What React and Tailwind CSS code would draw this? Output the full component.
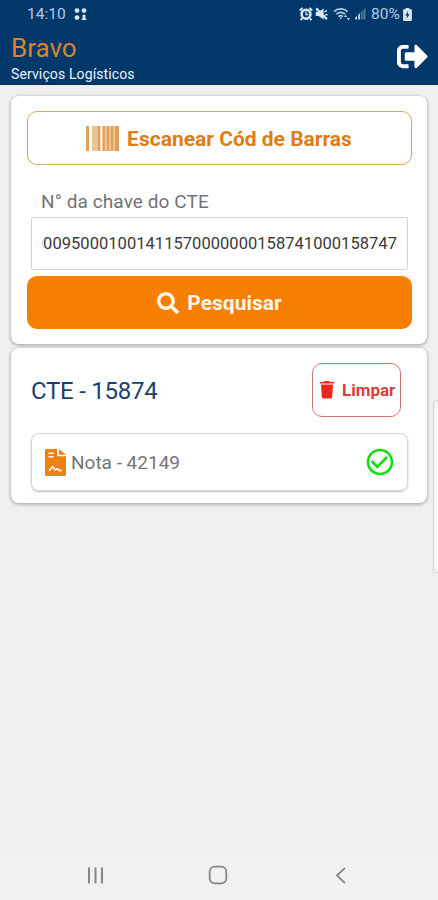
import React, { useState } from 'react';
import { FaSearch, FaSignOutAlt } from 'react-icons/fa';
import { MdCheckCircleOutline } from 'react-icons/md';

const StatusBar = () => (
  <div className="flex h-7 items-center justify-between pl-[27px] pr-[26px] text-[#b3cbe4]">
    <div className="flex items-center">
      <span className="w-[40px] pt-[2px] text-[15.5px] leading-none">14:10</span>
      <svg className="ml-[7px] h-[13px] w-[13px]" viewBox="0 0 13 13" fill="#d7e6f5">
        <circle cx="3" cy="2.6" r="2.4" />
        <circle cx="10" cy="2.6" r="2.4" />
        <circle cx="3" cy="9.6" r="2.4" />
        <circle cx="10" cy="8" r="1.6" />
        <path d="M7.4 12l1.6-3h2l1.6 3z" />
      </svg>
    </div>
    <div className="flex items-center">
      <svg className="h-[14px] w-[14px]" viewBox="0 0 14 14" fill="none" stroke="#d7e6f5">
        <circle cx="7" cy="7.2" r="4.4" strokeWidth="2.6" />
        <path d="M.8 3.6L3.6 1M13.2 3.6L10.4 1M3 11.2l-1.4 2M11 11.2l1.4 2" strokeWidth="2" />
        <path d="M7 4.6v3h2.2" strokeWidth="1.2" />
      </svg>
      <svg className="ml-[2px] h-[14px] w-[13px]" viewBox="0 0 13 14" fill="#d7e6f5" stroke="#d7e6f5">
        <path d="M.8 4.8h2.8L8.6 1.4v11L3.6 9H.8z" stroke="none" />
        <path d="M1.2 1.4l10.8 10.8" strokeWidth="2.2" />
        <path d="M9.6 5l2.4-1.6M10 7.8h2.6" strokeWidth="1.4" />
      </svg>
      <svg className="ml-[5px] h-[15px] w-[18px]" viewBox="0 0 18 15" fill="none" stroke="currentColor" strokeWidth="1.7">
        <path d="M1 4.6C4.8 1 10.8 1 14.6 4.6M3.4 7.2c2.6-2.2 6.2-2.2 8.8 0M5.6 9.6c1.4-1.1 3-1.1 4.4 0" />
        <path d="M7.8 12.4l-1.4-2h2.8zM12.6 7.8l-1.8 2.2h3.6zM15.4 13.4l-1.6-2.4h3.2z" fill="currentColor" stroke="none" />
      </svg>
      <svg className="ml-[3px] h-[12px] w-[12px]" viewBox="0 0 12 12" fill="currentColor">
        <path d="M1 11.4V9.8l2-2v3.6zM4 11.4V7l2-2v6.4z" />
        <path d="M7 11.4V4l1.6-1.6v9zM9.4 11.4V1.8L11.4 0v11.4z" opacity="0.45" />
      </svg>
      <span className="ml-[5px] w-[30px] whitespace-nowrap pt-[2px] text-[15.5px] leading-none">80%</span>
      <svg className="ml-[2px] h-[13px] w-[9px]" viewBox="0 0 9 13" fill="#d7e6f5">
        <path d="M2.6 0h3.8v1.2H8q.9 0 .9.9V12q0 .9-.9.9H1q-.9 0-.9-.9V2.1q0-.9.9-.9h1.6z" />
        <path d="M5.1 2.9L2.2 7.4h1.9l-.6 3.4 3.2-4.6H4.7z" fill="#03386b" />
      </svg>
    </div>
  </div>
);

const Header = () => (
  <header className="h-[85px] border-b border-[#0b2c55] bg-[#03386b]">
    <StatusBar />
    <div className="flex justify-between pl-[11px] pr-[10px]">
      <div>
        <h1 className="mt-[5px] text-[26px] leading-[30px] text-[#d8842a]">Bravo</h1>
        <p className="mt-[3px] text-[14px] leading-4 tracking-[0.12px] text-[#eaf2fa]">Serviços Logísticos</p>
      </div>
      <button type="button" aria-label="Sair" className="mt-[13px] h-[31px] text-white">
        <FaSignOutAlt className="h-[31px] w-[31px]" />
      </button>
    </div>
  </header>
);

const BarcodeIcon = () => (
  <svg className="-ml-px mr-[8px] h-[25px] w-[33px]" viewBox="0 0 33 25">
    <path d="M6 0h8v25H6zM16 0h17v25H16z" fill="#ecc48f" />
    <path d="M0 0h3v25H0zM12 0h2.4v25H12zM17 0h1.6v25H17zM21 0h2v25h-2zM25 0h2v25h-2zM29 0h4v25h-4z" fill="#dfa05a" />
  </svg>
);

const TrashIcon = () => (
  <svg className="mr-[7px] h-[18px] w-[16px]" viewBox="0 0 16 18" fill="#e52a1c">
    <path d="M5.8 0h4.4l.8.9h4.2v1.7H.8V.9H5z" />
    <path d="M2 3.6h12l-.8 12.4q-.1 1.4-1.4 1.4H4.2q-1.3 0-1.4-1.4z" />
  </svg>
);

const InvoiceIcon = () => (
  <svg className="h-[27px] w-[21px]" viewBox="0 0 21 27">
    <path d="M1.4 0h10.8v7.2H21v18.4q0 1.4-1.4 1.4H1.4Q0 27 0 25.6V1.4Q0 0 1.4 0z" fill="#f08010" />
    <path d="M14 0l7 5.8h-7z" fill="#f08010" />
    <path d="M3.6 4.2h5M3.6 7.8h5" stroke="#fff" strokeWidth="1.6" />
    <path d="M3.8 21.6c1.8 0 2.6-3.8 3.8-3.8s1.4 3 2.6 3 1-1.2 2-.8 1 1.6 4.4 1.6" fill="none" stroke="#fff" strokeWidth="1.7" />
  </svg>
);

const SearchCard = () => {
  const [chave, setChave] = useState('000950001001411570000000158741000158747');

  return (
    <section className="h-[248px] rounded-lg bg-white pl-4 pr-[15px] pt-[15px] shadow-[0_1px_3px_1px_rgba(0,0,0,0.24)]">
      <button
        type="button"
        className="flex h-[54px] w-full items-center justify-center rounded-[10px] border border-[#dba75c] text-[21px] font-bold text-[#dc7d18]"
      >
        <BarcodeIcon />
        <span className="pt-[3px]">Escanear Cód de Barras</span>
      </button>
      <label htmlFor="chave" className="mt-[25px] block pl-[14px] text-[19px] leading-6 tracking-[0.1px] text-[#737373]">
        N° da chave do CTE
      </label>
      <div className="mx-1 mt-[3px] flex h-[53px] items-center rounded-[2px] border border-[#d4d4d4] pl-[10px] pr-[10px] pt-px">
        {/* rtl keeps the end of a long key in view */}
        <input
          id="chave"
          dir="rtl"
          className="w-full bg-transparent text-[16.5px] tracking-[0.04px] text-[#3a3a3a] outline-none"
          value={chave}
          onChange={(e) => setChave(e.target.value)}
        />
      </div>
      <button
        type="button"
        className="mt-[6px] flex h-[53px] w-full items-center justify-center rounded-[10px] bg-[#f77f00] text-[21px] font-bold text-[#fff6e8]"
      >
        <FaSearch className="mr-[8px] h-[22px] w-[22px]" />
        <span className="pt-[3px]">Pesquisar</span>
      </button>
    </section>
  );
};

const ResultCard = () => (
  <section className="mt-1 h-[155px] rounded-lg bg-white pl-5 pr-[19px] pt-[15px] shadow-[0_1px_3px_1px_rgba(0,0,0,0.24)]">
    <div className="flex items-center justify-between pr-[7px]">
      <h2 className="pt-[2px] text-[24px] tracking-[-0.25px] text-[#1b416b]">CTE - 15874</h2>
      <button
        type="button"
        className="flex h-[54px] w-[89px] items-center rounded-[10px] border border-[#d37474] pl-[6px] text-[17px] font-bold text-[#d24238]"
      >
        <TrashIcon />
        <span className="pt-[2px]">Limpar</span>
      </button>
    </div>
    <div className="mt-4 flex h-[58px] items-center rounded-lg border border-[#d6d6d6] pl-[13px] pr-[11px] shadow-[0_1px_2px_rgba(0,0,0,0.25)]">
      <InvoiceIcon />
      <span className="ml-[5px] pt-[3px] text-[19px] text-[#757575]">Nota - 42149</span>
      <MdCheckCircleOutline className="ml-auto h-[32px] w-[32px] text-[#10e010]" />
    </div>
  </section>
);

const NavBar = () => (
  <nav className="flex h-[51px] items-center bg-[#f1f1f1]">
    <svg className="ml-[87px] mt-px h-[17px] w-[17px]" viewBox="0 0 17 17" stroke="#858585" strokeWidth="2">
      <path d="M2 .5v16M8.5 .5v16M15 .5v16" />
    </svg>
    <svg className="ml-[104px] mt-px h-[20px] w-[20px]" viewBox="0 0 20 20" fill="none" stroke="#858585" strokeWidth="1.8">
      <rect x="1.7" y="1.7" width="16.6" height="16.6" rx="5" />
    </svg>
    <svg className="ml-[107px] mt-px h-[17px] w-[11px]" viewBox="0 0 11 17" fill="none" stroke="#858585" strokeWidth="1.8">
      <path d="M10 .8L2 8.5l8 7.7" />
    </svg>
  </nav>
);

const App = () => (
  <div className="relative flex h-[900px] w-[438px] flex-col overflow-hidden bg-[#efefef] font-['Roboto',sans-serif]">
    <Header />
    <main className="flex-1 px-[11px] pt-[11px]">
      <SearchCard />
      <ResultCard />
    </main>
    <NavBar />
    {/* edge panel handle, floats over the screen */}
    <div className="absolute -right-1 top-[400px] h-[173px] w-[9px] rounded-l-[4px] border border-[#cfcfcf] bg-[#f7f7f7]" />
  </div>
);

export default App;
